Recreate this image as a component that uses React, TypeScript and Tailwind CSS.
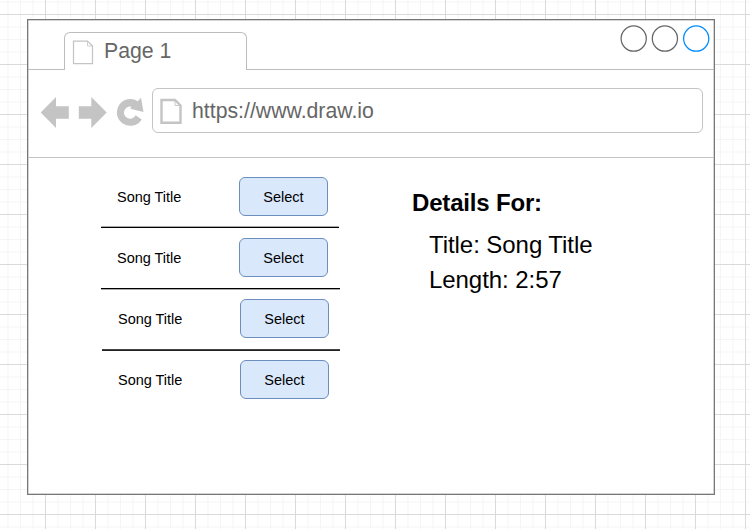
import React from "react";

type Song = {
  title: string;
  offset: string;
  rule?: string;
};

const songs: Song[] = [
  { title: "Song Title", offset: "pl-[16px]", rule: "mt-[10px] w-[238px] border-t-[#aaa] bg-black" },
  { title: "Song Title", offset: "pl-[16px]", rule: "mt-[11px] w-[239px] border-t-black bg-[#aaa]" },
  { title: "Song Title", offset: "pl-[17px]", rule: "mt-[11px] ml-px w-[238px] border-t-[#444] bg-[#222]" },
  { title: "Song Title", offset: "pl-[17px]" },
];

const gridClass =
  "bg-[linear-gradient(to_right,#dadada_1px,transparent_1px),linear-gradient(to_bottom,#dadada_1px,transparent_1px),linear-gradient(to_right,#f5f5f5_1px,transparent_1px),linear-gradient(to_bottom,#f5f5f5_1px,transparent_1px)] bg-[size:50px_50px,50px_50px,12.5px_12.5px,12.5px_12.5px] bg-[position:45px_14px,45px_14px,45px_14px,45px_14px]";

function NavIcons() {
  return (
    <svg className="mt-[16px] ml-[12px] h-[34px] w-[106px] shrink-0" viewBox="40 95 106 34" fill="#c4c4c4">
      <path d="M40.7 112.5 L56 97 V106.3 H68.8 V118.8 H56 V128 Z" />
      <path d="M106.7 112.5 L91.3 97 V106.3 H78.8 V118.8 H91.3 V128 Z" />
      <path d="M141.7 119.4 A13.4 13.4 0 1 1 137.8 101.3 L141 97.7 L143.5 112 L130.3 108.8 L131.4 106.7 A6.1 6.1 0 1 0 135.6 115.2 Z" />
    </svg>
  );
}

function WindowControls() {
  return (
    <svg className="h-[30px] w-[92px]" viewBox="619 24 92 30" fill="none" stroke="#666" strokeWidth="1.25">
      <circle cx="633.7" cy="38.6" r="12.6" />
      <circle cx="664.9" cy="38.6" r="12.6" />
      <circle cx="696.2" cy="38.6" r="12.6" stroke="#008cff" />
    </svg>
  );
}

function Tab() {
  return (
    <div className="flex h-[38px] w-[183px] shrink-0 rounded-t-[6px] border-x border-t border-[#bcbcbc]">
      <svg className="mt-[7px] ml-[7px] h-[25px] w-[22px] shrink-0" viewBox="72 40 22 25" fill="none" stroke="#c4c4c4" strokeWidth="1.25">
        <path d="M73.5 41 H87.5 L92.5 46 V63.5 H73.5 Z" />
        <path d="M87.5 41 V46 H92.5" strokeWidth="0.8" />
      </svg>
      <span className="mt-[6px] ml-[10px] text-[21.25px] leading-[24px]">Page 1</span>
    </div>
  );
}

export default function App() {
  return (
    <main
      className={`flex h-[529px] w-[750px] overflow-hidden bg-white pt-[19px] pl-[27px] font-['Liberation_Sans',Arial,sans-serif] text-[#666] ${gridClass}`}
    >
      <section className="h-[476px] w-[688px] border border-[#777] bg-white shadow-[inset_0_0_0_0.5px_#aaa]">
        <header className="flex h-[50px] items-end">
          <div className="h-px w-[36px] shrink-0 bg-[#bcbcbc]" />
          <Tab />
          <div className="flex h-full grow justify-end border-b border-[#bcbcbc] pt-[4px] pr-[3px]">
            <WindowControls />
          </div>
        </header>

        <nav className="flex h-[88px] border-b border-[#c4c4c4] pt-[9px]">
          <NavIcons />
          <div className="mt-[9px] ml-[6px] flex h-[45px] w-[551px] rounded-[6px] border border-[#c4c4c4]">
            <svg className="mt-[8px] ml-[6px] h-[28px] w-[24px] shrink-0" viewBox="159 97 24 28" fill="none" stroke="#c4c4c4" strokeWidth="2.4">
              <path d="M161.5 100 H175 L180.5 105.5 V122.8 H161.5 Z" />
              <path d="M175 100 V105.5 H180.5" strokeWidth="0.9" />
            </svg>
            <span className="mt-[10px] ml-[9px] text-[21.25px] leading-[24px]">https://www.draw.io</span>
          </div>
        </nav>

        <div className="flex text-black">
          <ul className="ml-[73px] w-[240px] pt-[19px]">
            {songs.map((song, index) => (
              <li key={index} className="h-[61px]">
                <div className={`flex h-[39px] items-center ${song.offset}`}>
                  <span className="w-[122px] text-[14.5px] leading-[18px] tracking-[-0.03px]">{song.title}</span>
                  <button className="h-[39px] w-[89px] rounded-[6px] border border-[#6c8ebf] bg-[#dae8fc] text-[14.5px] leading-[18px]">
                    Select
                  </button>
                </div>
                {song.rule && <div className={`h-[2px] border-t ${song.rule}`} />}
              </li>
            ))}
          </ul>
          <section className="ml-[71px] pt-[31px]">
            <h1 className="text-[24px] leading-[28px] font-bold tracking-[-0.18px]">Details For:</h1>
            <div className="mt-[10px] ml-[17px] text-[24px] leading-[35px] tracking-[-0.06px]">
              <p>Title: Song Title</p>
              <p>Length: 2:57</p>
            </div>
          </section>
        </div>
      </section>
    </main>
  );
}
